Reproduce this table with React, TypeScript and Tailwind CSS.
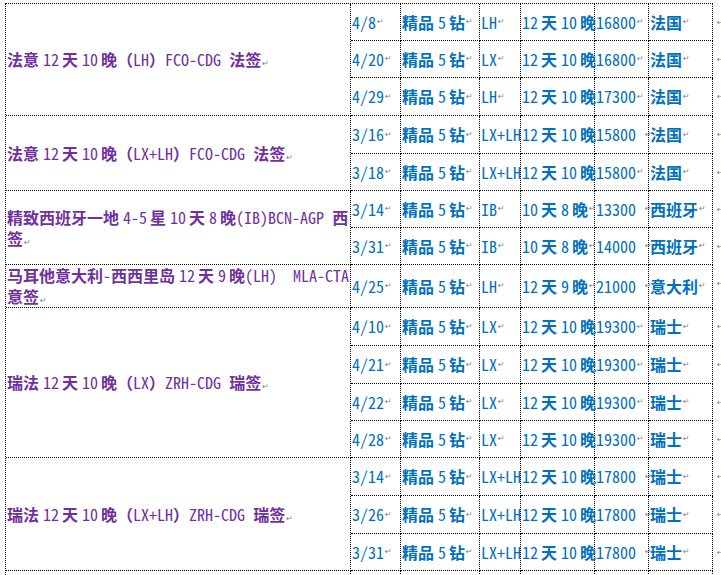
import React from "react";
import clsx from "clsx";

const CJK = /([\u3000-\u303f\u4e00-\u9fff\uff00-\uffef]+)/;
const IDEO = /[\u4e00-\u9fff]/;
const ALNUM = /[A-Za-z0-9]/;

function Mark() {
  return (
    <span className="inline-block w-[6px] ml-[1px] font-['DejaVu_Sans'] text-[8px] leading-none text-[#808080] font-normal tracking-normal">
      ↵
    </span>
  );
}

// splits a Word-style line into CJK (bold) and latin (thin, half width) runs
function Rich({ text, mark = true }: { text: string; mark?: boolean }) {
  const parts = text.split(CJK).filter(Boolean);
  return (
    <>
      {parts.map((p, i) => {
        if (CJK.test(p)) {
          return (
            <span key={i} className="font-bold">
              {p}
            </span>
          );
        }
        const prev = parts[i - 1];
        const next = parts[i + 1];
        const gapL = prev && IDEO.test(prev[prev.length - 1]) && ALNUM.test(p[0]);
        const gapR = next && IDEO.test(next[0]) && ALNUM.test(p[p.length - 1]);
        return (
          <span
            key={i}
            className={clsx(
              "font-['Noto_Sans_Mono_CJK_SC','Liberation_Mono',monospace] font-normal whitespace-pre",
              gapL && "pl-[4px]",
              gapR && "pr-[3px]"
            )}
          >
            {p}
          </span>
        );
      })}
      {mark && <Mark />}
    </>
  );
}

type Row = {
  date: string;
  air: string;
  days: string;
  price: string;
  country: string;
};

type Group = { title: string[]; rows: Row[] };

const groups: Group[] = [
  {
    title: ["法意12天10晚（LH）FCO-CDG 法签"],
    rows: [
      { date: "4/8", air: "LH", days: "12天10晚", price: "16800", country: "法国" },
      { date: "4/20", air: "LX", days: "12天10晚", price: "16800", country: "法国" },
      { date: "4/29", air: "LH", days: "12天10晚", price: "17300", country: "法国" },
    ],
  },
  {
    title: ["法意12天10晚（LX+LH）FCO-CDG 法签"],
    rows: [
      { date: "3/16", air: "LX+LH", days: "12天10晚", price: "15800 ", country: "法国" },
      { date: "3/18", air: "LX+LH", days: "12天10晚", price: "15800", country: "法国" },
    ],
  },
  {
    title: ["精致西班牙一地4-5星10天8晚(IB)BCN-AGP 西", "签"],
    rows: [
      { date: "3/14", air: "IB", days: "10天8晚", price: "13300 ", country: "西班牙" },
      { date: "3/31", air: "IB", days: "10天8晚", price: "14000 ", country: "西班牙" },
    ],
  },
  {
    title: ["马耳他意大利-西西里岛12天9晚(LH)  MLA-CTA", "意签"],
    rows: [
      { date: "4/25", air: "LH", days: "12天9晚", price: "21000 ", country: "意大利" },
    ],
  },
  {
    title: ["瑞法12天10晚（LX）ZRH-CDG 瑞签"],
    rows: [
      { date: "4/10", air: "LX", days: "12天10晚", price: "19300", country: "瑞士" },
      { date: "4/21", air: "LX", days: "12天10晚", price: "19300", country: "瑞士" },
      { date: "4/22", air: "LX", days: "12天10晚", price: "19300", country: "瑞士" },
      { date: "4/28", air: "LX", days: "12天10晚", price: "19300", country: "瑞士" },
    ],
  },
  {
    title: ["瑞法12天10晚（LX+LH）ZRH-CDG 瑞签"],
    rows: [
      { date: "3/14", air: "LX+LH", days: "12天10晚", price: "17800 ", country: "瑞士" },
      { date: "3/26", air: "LX+LH", days: "12天10晚", price: "17800 ", country: "瑞士" },
      { date: "3/31", air: "LX+LH", days: "12天10晚", price: "17800 ", country: "瑞士" },
    ],
  },
];

const spans: Record<number, string> = {
  1: "row-span-1",
  2: "row-span-2",
  3: "row-span-3",
  4: "row-span-4",
};

const cell =
  "border-r border-b border-dotted border-black flex items-center whitespace-nowrap overflow-visible text-[#0070C0] pl-[1px]";

export default function App() {
  const totalRows = groups.reduce((n, g) => n + g.rows.length, 0) + 1;
  return (
    <div className="w-[721px] h-[575px] overflow-hidden bg-white pt-[3px] pl-[5px] flex font-['Noto_Sans_CJK_SC',sans-serif] text-[16px] leading-[21px]">
      <div className="grid shrink-0 grid-cols-[345px_50px_79px_41px_74px_54px_64px] grid-rows-[37px_37px_38px_38px_37px_37px_37px_43px_38px_38px_37px_37px_38px_38px_37px_37px] border-l border-t border-dotted border-black">
        {groups.map((g, gi) => (
          <React.Fragment key={gi}>
            <div
              className={clsx(
                spans[g.rows.length],
                "border-r border-b border-dotted border-black flex flex-col justify-center pl-[1px] text-[#7030A0] whitespace-nowrap"
              )}
            >
              {g.title.map((line, li) => (
                <div key={li}>
                  <Rich text={line} mark={li === g.title.length - 1} />
                </div>
              ))}
            </div>
            {g.rows.map((r, ri) => (
              <React.Fragment key={ri}>
                <div className={cell}>
                  <Rich text={r.date} />
                </div>
                <div className={cell}>
                  <Rich text="精品5钻" />
                </div>
                <div className={cell}>
                  <Rich text={r.air} mark={r.air.length < 5} />
                </div>
                <div className={cell}>
                  <Rich text={r.days} mark={r.days.length < 6} />
                </div>
                <div className={cell}>
                  <Rich text={r.price} />
                </div>
                <div className={cell}>
                  <Rich text={r.country} />
                </div>
              </React.Fragment>
            ))}
          </React.Fragment>
        ))}
        {/* next row, cut off by the window */}
        <div className="border-r border-b border-dotted border-black" />
        <div className={cell} />
        <div className={cell} />
        <div className={cell} />
        <div className={cell} />
        <div className={cell} />
        <div className={cell} />
      </div>
      {/* end-of-row marks */}
      <div className="grid shrink-0 w-[8px] pt-[1px] grid-rows-[37px_37px_38px_38px_37px_37px_37px_43px_38px_38px_37px_37px_38px_38px_37px_37px]">
        {Array.from({ length: totalRows }).map((_, i) => (
          <div key={i} className="pl-[3px] pt-[6px] leading-none">
            <Mark />
          </div>
        ))}
      </div>
    </div>
  );
}
